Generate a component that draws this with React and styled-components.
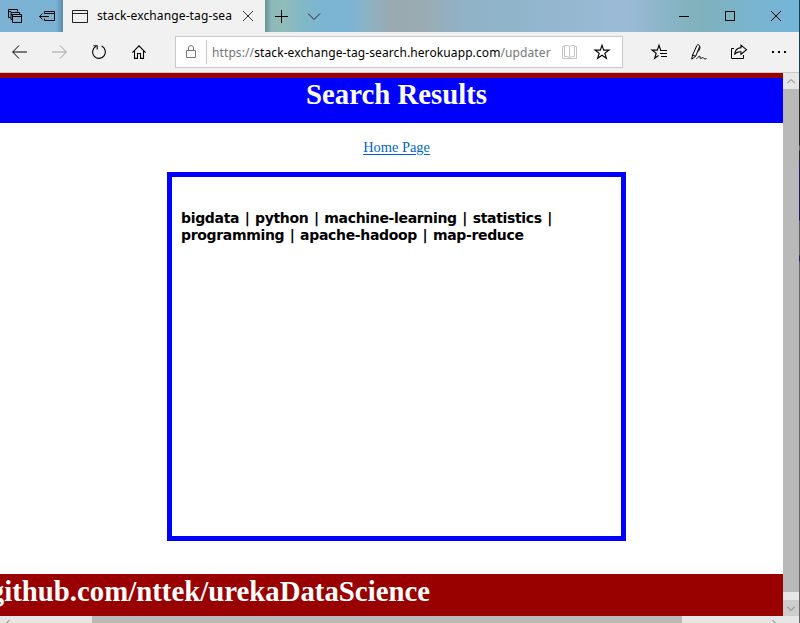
import React from "react";
import styled, { createGlobalStyle } from "styled-components";

const GlobalStyle = createGlobalStyle`
  * { box-sizing: border-box; }
  html, body { margin: 0; padding: 0; overflow: hidden; background: #fff; }
`;

const Desktop = styled.div`
  width: 800px;
  height: 623px;
  overflow: hidden;
  display: grid;
  grid-template-columns: 799px 1px;
`;

const DesktopEdge = styled.div`
  background: linear-gradient(#16404f 0 80px, #24282b 81px 145px, #5e6a74 146px 150px, #24282b 151px 163px, #1c1c5c 164px 220px, #5c5f60 221px 255px, #24246a 256px 261px, #666 262px 623px);
`;

const Window = styled.div`
  height: 623px;
  overflow: hidden;
  display: flex;
  flex-direction: column;
  font-family: "Noto Sans", "Open Sans", sans-serif;
  font-size: 12px;
  color: #000;
`;

const Titlebar = styled.header`
  flex: none;
  height: 32px;
  display: flex;
  background: linear-gradient(90deg, #7cb3d4 0, #78b1d3 120px, #8cb9b8 265px, #90bcba 285px, #80b7c8 305px, #7bb5d3 325px, #7db4d3 350px, #8cb2c4 368px, #99abb1 390px, #9aacb2 425px, #91b1c6 460px, #90b5cb 510px, #96b8d1 580px, #9bbad6 625px, #8bb5c8 665px, #7fb1bb 700px, #7ab4cb 740px, #74b5d9 799px);
`;

const TabTools = styled.div`
  width: 63px;
  display: flex;
  background: linear-gradient(90deg, transparent 56px, rgba(30, 70, 100, 0.35));
`;

const Tab = styled.div`
  width: 202px;
  display: flex;
  align-items: center;
  background: #f1f1f1;
  padding-left: 1px;
`;

const TabTitle = styled.span`
  width: 136px;
  white-space: nowrap;
  line-height: 20px;
  letter-spacing: 0.12px;
`;

const TabActions = styled.div`
  width: 390px;
  display: flex;
  background: linear-gradient(90deg, rgba(30, 80, 90, 0.35), transparent 7px);
`;

const Controls = styled.div`
  display: flex;
  margin-left: 6px;
`;

const IconCell = styled.span`
  flex: none;
  width: ${(p) => p.$w}px;
  display: flex;
  align-items: center;
  justify-content: center;
  svg { display: block; overflow: visible; }
`;

const Toolbar = styled.nav`
  flex: none;
  height: 41px;
  display: flex;
  align-items: center;
  background: #f1f1f1;
  border-bottom: 1px solid #c8c8c8;
`;

const AddressBar = styled.div`
  width: 448px;
  height: 32px;
  margin: 0 17px 0 16px;
  display: flex;
  align-items: center;
  background: #fff;
  border: 1px solid #c8c8c8;
`;

const Divider = styled.i`
  width: 1px;
  height: 24px;
  background: #c8c8c8;
  margin-right: 5px;
`;

const Url = styled.span`
  width: 343px;
  padding-top: 1px;
  white-space: nowrap;
  color: #767676;
  line-height: 20px;
  letter-spacing: 0.1px;
  b { font-weight: 400; color: #000; }
`;

const Viewport = styled.div`
  flex: none;
  height: 543px;
  display: grid;
  grid-template-columns: 783px 16px;
`;

const Page = styled.main`
  overflow: hidden;
  background: #fff;
  display: flex;
  flex-direction: column;
  align-items: center;
  font-family: "Liberation Serif", "Times New Roman", serif;
`;

const Heading = styled.h1`
  margin: 0;
  width: 100%;
  height: 50px;
  padding-left: 10px;
  border-top: 5px solid #900;
  background: #00f;
  color: #fff;
  text-align: center;
  font-size: 28.8px;
  line-height: 32px;
`;

const HomeLink = styled.a`
  margin: 16px 0 0 10px;
  height: 33px;
  color: #0066cc;
  font-size: 14.4px;
  line-height: 17px;
  text-decoration: underline;
  text-underline-offset: 2px;
`;

const ResultBox = styled.section`
  width: 459px;
  height: 369px;
  margin-left: 10px;
  border: 5px solid #00f;
  padding: 33px 9px;
  font: bold 14px/17px "DejaVu Sans", Verdana, sans-serif;
`;

const ResultLine = styled.div`
  white-space: nowrap;
  letter-spacing: -0.33px;
  word-spacing: 1px;
`;

const Footer = styled.footer`
  width: 100%;
  height: 42px;
  margin-top: 33px;
  background: #900;
  color: #fff;
  font-size: 28.8px;
  font-weight: bold;
  line-height: 34px;
  white-space: nowrap;
  display: flex;
  justify-content: flex-end;
  padding-right: 353px;
`;

const VScroll = styled.div`
  display: grid;
  grid-template-rows: 16px 503px 8px 16px;
  background: #e6e6e6;
`;

const HScroll = styled.div`
  flex: none;
  height: 7px;
  display: grid;
  grid-template-columns: 92px 590px 117px;
  background: #e6e6e6;
  overflow: hidden;
`;

const Thumb = styled.div`
  background: #b9b9b9;
`;

const ScrollButton = styled.div`
  display: flex;
  align-items: center;
  justify-content: center;
  background: ${(p) => p.$bg || "#e6e6e6"};
`;

const ArrowTrack = styled.div`
  padding: 4px ${(p) => p.$right || 0}px 0 ${(p) => p.$left || 0}px;
  display: flex;
  justify-content: ${(p) => (p.$right ? "flex-end" : "flex-start")};
  svg { flex: none; }
`;

function Icon({ w = 16, h = 16, color = "#000", sw = 1, crisp, children }) {
  return (
    <svg width={w} height={h} viewBox={`0 0 ${w} ${h}`} fill="none" stroke={color} strokeWidth={sw} shapeRendering={crisp ? "crispEdges" : "auto"}>
      {children}
    </svg>
  );
}

const star = "M8 1.2 9.7 6.1H15L10.8 9.2 12.4 14.3 8 11.2 3.6 14.3 5.2 9.2 1 6.1H6.3Z";

export default function App() {
  return (
    <>
      <GlobalStyle />
      <Desktop>
        <Window>
          <Titlebar>
            <TabTools>
              <IconCell $w={30}>
                <Icon w={14} h={14}>
                  <path d="M2.5 8.5H.5V.5H9.5V2.5M.5 2.5H3M4.5 10.5H3V3.5H11.5V5.5M3 5.5H4.5" />
                  <path d="M4.5 13.5V5.5H13.5V13.5ZM4.5 7.5H13.5" />
                </Icon>
              </IconCell>
              <IconCell $w={34}>
                <Icon w={16} h={10}>
                  <path d="M5.5 3V.5H15.5V9.5H5.5V7.5M5.5 2.5H15.5M.5 5.5H10M3.5 2.5 .5 5.5 3.5 8.5" />
                </Icon>
              </IconCell>
            </TabTools>
            <Tab>
              <IconCell $w={33}>
                <Icon w={17} h={13} color="#222"><path d="M.5 .5H15.5V12.5H.5ZM.5 3.5H15.5" /></Icon>
              </IconCell>
              <TabTitle>stack-exchange-tag-sea</TabTitle>
              <IconCell $w={30}>
                <Icon w={10} h={10} color="#333"><path d="M0 0 10 10M10 0 0 10" /></Icon>
              </IconCell>
            </Tab>
            <TabActions>
              <IconCell $w={33}>
                <Icon w={13} h={13}><path d="M6.5 0V13M0 6.5H13" /></Icon>
              </IconCell>
              <IconCell $w={31}>
                <Icon w={12} h={7} color="#222"><path d="M0 .5 6 6.5 12 .5" /></Icon>
              </IconCell>
            </TabActions>
            <Controls>
              <IconCell $w={46}><Icon w={10} h={1}><path d="M0 .5H10" /></Icon></IconCell>
              <IconCell $w={46}><Icon w={10} h={10}><path d="M.5 .5H9.5V9.5H.5Z" /></Icon></IconCell>
              <IconCell $w={46}><Icon w={10} h={10}><path d="M0 0 10 10M10 0 0 10" /></Icon></IconCell>
            </Controls>
          </Titlebar>

          <Toolbar>
            <IconCell $w={39}>
              <Icon w={15} h={14}><path d="M7 .5 .7 7 7 13.5M.7 7H15" /></Icon>
            </IconCell>
            <IconCell $w={40}>
              <Icon w={15} h={14} color="#a0a0a0"><path d="M8 .5 14.3 7 8 13.5M14.3 7H0" /></Icon>
            </IconCell>
            <IconCell $w={40}>
              <Icon w={14} h={14} sw={1.1}><path d="M9.5 1.1A6.4 6.4 0 1 1 3.7 1.5M1.5 .7H5.2V4.4" /></Icon>
            </IconCell>
            <IconCell $w={40}>
              <Icon w={14} h={14} sw={1.1}><path d="M.4 7.6 7 .9 13.6 7.6M2.5 6V13.4H5.5V8.5H8.5V13.4H11.5V6" /></Icon>
            </IconCell>
            <AddressBar>
              <IconCell $w={30}>
                <Icon w={10} h={14} color="#767676"><path d="M.5 5.5H9.5V12.5H.5ZM2.5 5.5V3A2.5 2.5 0 0 1 7.5 3V5.5" /></Icon>
              </IconCell>
              <Divider />
              <Url>https://<b>stack-exchange-tag-search.herokuapp.com</b>/updater</Url>
              <IconCell $w={28}>
                <Icon w={15} h={14} color="#c4c4c4"><path d="M2.5 1.5H.5V13.5H14.5V1.5H12.5M7.5 1.5V12M2.5 .5H5.5L7.5 1.5 9.5 .5H12.5V11.5H9.5L7.5 13 5.5 11.5H2.5Z" /></Icon>
              </IconCell>
              <IconCell $w={37}><Icon sw={1.1}><path d={star} /></Icon></IconCell>
            </AddressBar>
            <IconCell $w={39}>
              <Icon w={17} h={16}>
                <path strokeWidth="1.1" d="M10 6.1H9.7L8 1.2 6.3 6.1H1L5.2 9.2 3.6 14.3 7.5 11.5" />
                <path d="M9 6.5H16M9 9.5H16M10 12.5H16" />
              </Icon>
            </IconCell>
            <IconCell $w={40}>
              <Icon w={16} h={16}>
                <path d="M.7 15.2 1.6 11 5.8 1.6C6.6 0 9 .8 8.6 2.7L4.6 12.3 .7 15.2ZM1.6 11 4.6 12.3M8.6 2.3C9.8 3.8 8 6 7.4 7.5M5.5 14.8C7.5 12.6 9.2 11.6 9.2 12.8 9.2 14.2 8.8 15.2 10.4 14.2 11.8 13.2 12.4 13.5 13 14.5 13.8 15.2 14.8 14.8 15.5 14.5" />
              </Icon>
            </IconCell>
            <IconCell $w={40}>
              <Icon w={16} h={16}>
                <path d="M3 4.5H.5V14.5H12.5V11" />
                <path strokeWidth="1.1" d="M10 1.1 15.5 5.7 10 10.3V7.8C7 7.5 5 8.4 3.5 10.5 4 6.4 6.4 3.9 10 3.6Z" />
              </Icon>
            </IconCell>
            <IconCell $w={40}>
              <Icon w={14} h={2} crisp><path strokeWidth="2" d="M0 1H2M6 1H8M12 1H14" /></Icon>
            </IconCell>
          </Toolbar>

          <Viewport>
            <Page>
              <Heading>Search Results</Heading>
              <HomeLink>Home Page</HomeLink>
              <ResultBox>
                <ResultLine>bigdata | python | machine-learning | statistics |</ResultLine>
                <ResultLine>programming | apache-hadoop | map-reduce</ResultLine>
              </ResultBox>
              <Footer>github.com/nttek/urekaDataScience</Footer>
            </Page>
            <VScroll>
              <ScrollButton><Icon w={8} h={5} color="#777"><path d="M0 4.5 4 .5 8 4.5" /></Icon></ScrollButton>
              <Thumb />
              <div />
              <ScrollButton $bg="#cdcdcd"><Icon w={8} h={5} color="#777"><path d="M0 .5 4 4.5 8 .5" /></Icon></ScrollButton>
            </VScroll>
          </Viewport>
          <HScroll>
            <ArrowTrack $left={5}><Icon w={5} h={8} color="#777"><path d="M4.5 0 .5 4 4.5 8" /></Icon></ArrowTrack>
            <Thumb />
            <ArrowTrack $right={22}><Icon w={5} h={8} color="#777"><path d="M.5 0 4.5 4 .5 8" /></Icon></ArrowTrack>
          </HScroll>
        </Window>
        <DesktopEdge />
      </Desktop>
    </>
  );
}
